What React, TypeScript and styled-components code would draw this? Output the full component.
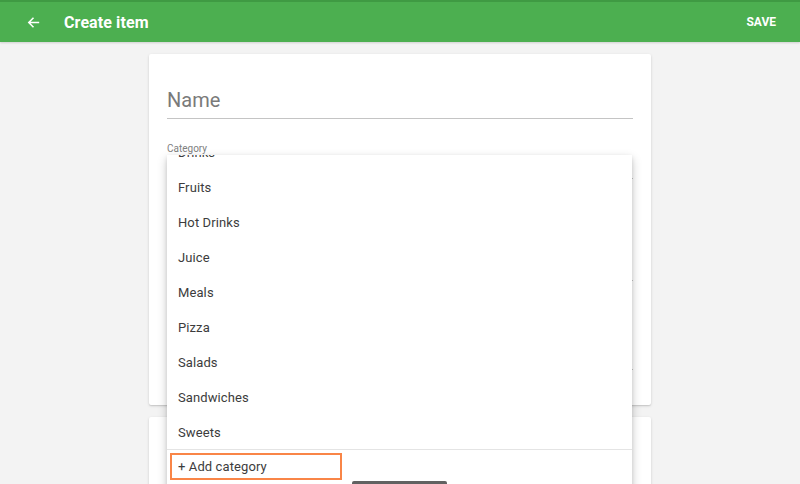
import React from "react";
import styled, { createGlobalStyle } from "styled-components";

const GlobalStyle = createGlobalStyle`
  html, body {
    margin: 0;
    padding: 0;
    height: 484px;
    overflow: hidden;
    background: #f3f3f3;
    font-family: Roboto, "Noto Sans", Arial, sans-serif;
  }
`;

const Page = styled.div`
  display: flex;
  flex-direction: column;
  height: 484px;
  overflow: hidden;
`;

const AppBar = styled.header`
  flex-shrink: 0;
  height: 42px;
  box-sizing: border-box;
  border-top: 2px solid #3f9a43;
  background: #4caf50;
  display: flex;
  align-items: center;
  padding: 0 24px 0 24px;
  color: #fff;
  box-shadow: 0 1px 2px rgba(0, 0, 0, 0.15);
`;

const BackButton = styled.button`
  width: 18px;
  height: 18px;
  padding: 0;
  border: none;
  background: transparent;
  color: #fff;
  display: flex;
  align-items: center;
  justify-content: center;
  margin-right: 22px;
`;

const Title = styled.h1`
  margin: 0;
  flex: 1;
  font-size: 16px;
  font-weight: 700;
  letter-spacing: 0.1px;
`;

const SaveButton = styled.button`
  border: none;
  background: transparent;
  color: #fff;
  font-family: inherit;
  font-size: 12px;
  font-weight: 700;
  padding: 0;
`;

const Main = styled.main`
  display: flex;
  flex-direction: column;
  align-items: center;
  gap: 12px;
  padding-top: 12px;
`;

const Card = styled.section<{ $height?: number }>`
  position: relative;
  width: 502px;
  box-sizing: border-box;
  background: #fff;
  border-radius: 2px;
  box-shadow: 0 1px 3px rgba(0, 0, 0, 0.14), 0 1px 1px rgba(0, 0, 0, 0.08);
  padding: 24px 18px 0;
  height: ${(p) => (p.$height ? `${p.$height}px` : "auto")};
  flex-shrink: 0;
`;

const NameField = styled.div`
  height: 41px;
  box-sizing: border-box;
  border-bottom: 1px solid #c4c4c4;
  display: flex;
  align-items: flex-end;
  padding-bottom: 6px;
  font-size: 20px;
  line-height: 24px;
  color: #7a7a7a;
`;

const Field = styled.div<{ $top: number; $height: number }>`
  position: relative;
  margin-top: ${(p) => p.$top}px;
  height: ${(p) => p.$height}px;
  box-sizing: border-box;
  border-bottom: 1px solid #c4c4c4;
`;

const FieldLabel = styled.label`
  display: block;
  font-size: 10px;
  line-height: 12px;
  color: #808080;
`;

const Menu = styled.div`
  position: absolute;
  left: 0;
  top: 12px;
  width: 465px;
  height: 340px;
  background: #fff;
  box-shadow: 0 4px 10px rgba(0, 0, 0, 0.2), 0 2px 4px rgba(0, 0, 0, 0.12);
  display: flex;
  flex-direction: column;
  z-index: 5;
`;

const MenuList = styled.ul`
  list-style: none;
  margin: 0;
  padding: 0;
  height: 294px;
  overflow: hidden;
  border-bottom: 1px solid #e4e4e4;
`;

const MenuScroll = styled.div`
  margin-top: -20px;
`;

const MenuItem = styled.li`
  height: 35px;
  display: flex;
  align-items: center;
  padding-left: 11px;
  font-size: 13px;
  color: #3c3c3c;
  letter-spacing: 0.1px;
`;

const MenuFooter = styled.div`
  padding: 3px 0 0 3px;
`;

const AddCategory = styled.button`
  width: 172px;
  height: 27px;
  box-sizing: border-box;
  border: 2px solid #f98547;
  background: #fff;
  text-align: left;
  padding: 0 0 0 6px;
  font-family: inherit;
  font-size: 13px;
  color: #3c3c3c;
  letter-spacing: 0.1px;
`;

const Snackbar = styled.div`
  position: fixed;
  left: 352px;
  top: 481px;
  width: 95px;
  height: 24px;
  background: #616161;
  border-radius: 2px 2px 0 0;
  z-index: 10;
`;

const categories = [
  "Drinks",
  "Fruits",
  "Hot Drinks",
  "Juice",
  "Meals",
  "Pizza",
  "Salads",
  "Sandwiches",
  "Sweets",
];

const App: React.FC = () => {
  return (
    <Page>
      <GlobalStyle />
      <AppBar>
        <BackButton aria-label="Back">
          <svg width="13" height="13" viewBox="0 0 16 16">
            <path
              d="M15 8H2.5M8 2.2 2.2 8 8 13.8"
              fill="none"
              stroke="#fff"
              strokeWidth="1.9"
            />
          </svg>
        </BackButton>
        <Title>Create item</Title>
        <SaveButton>SAVE</SaveButton>
      </AppBar>
      <Main>
        <Card $height={351}>
          <NameField>Name</NameField>
          <Field $top={24} $height={36}>
            <FieldLabel>Category</FieldLabel>
            <Menu>
              <MenuList>
                <MenuScroll>
                  {categories.map((c) => (
                    <MenuItem key={c}>{c}</MenuItem>
                  ))}
                </MenuScroll>
              </MenuList>
              <MenuFooter>
                <AddCategory>+ Add category</AddCategory>
              </MenuFooter>
            </Menu>
          </Field>
          <Field $top={20} $height={82} />
          <Field $top={20} $height={69} />
        </Card>
        <Card $height={120} />
      </Main>
      <Snackbar />
    </Page>
  );
};

export default App;
